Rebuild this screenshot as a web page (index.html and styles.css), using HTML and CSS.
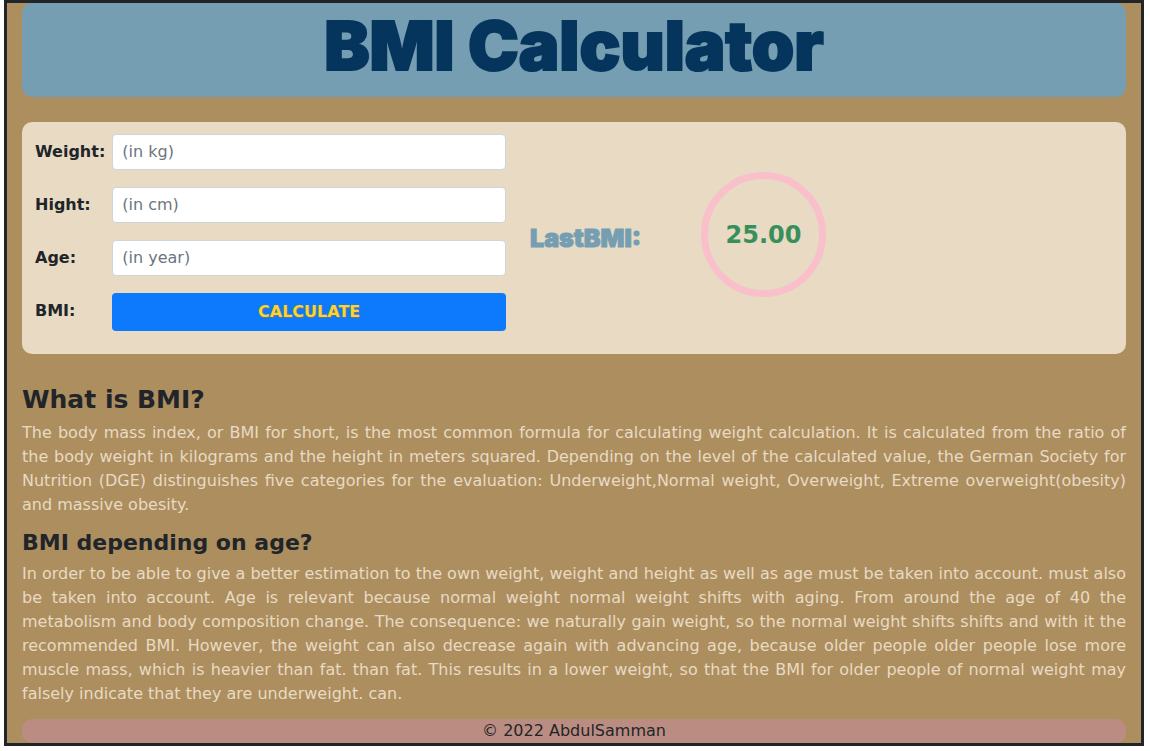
FILE: index.html
```html
<!DOCTYPE html>
<html lang="en">
<head>
<meta charset="utf-8">
<title>BMI Calculator</title>
<link rel="stylesheet" href="styles.css">
</head>
<body>
<div class="page">
  <header class="banner"><h1 class="title">BMI Calculator</h1></header>
  <main>
    <section class="card">
      <form class="form">
        <label class="label" for="weight">Weight:</label>
        <input class="field" id="weight" type="text" placeholder="(in kg)">
        <label class="label" for="height">Hight:</label>
        <input class="field" id="height" type="text" placeholder="(in cm)">
        <label class="label" for="age">Age:</label>
        <input class="field" id="age" type="text" placeholder="(in year)">
        <label class="label" for="calculate">BMI:</label>
        <button class="calculate" id="calculate" type="button">CALCULATE</button>
      </form>
      <h2 class="last">LastBMI:</h2>
      <output class="result">25.00</output>
    </section>
    <h2 class="heading">What is BMI?</h2>
    <p class="text">The body mass index, or BMI for short, is the most common formula for calculating weight calculation. It is calculated from the ratio of the body weight in kilograms and the height in meters squared. Depending on the level of the calculated value, the German Society for Nutrition (DGE) distinguishes five categories for the evaluation: Underweight,Normal weight, Overweight, Extreme overweight(obesity) and massive obesity.</p>
    <h3 class="subheading">BMI depending on age?</h3>
    <p class="text">In order to be able to give a better estimation to the own weight, weight and height as well as age must be taken into account. must also be taken into account. Age is relevant because normal weight normal weight shifts with aging. From around the age of 40 the metabolism and body composition change. The consequence: we naturally gain weight, so the normal weight shifts shifts and with it the recommended BMI. However, the weight can also decrease again with advancing age, because older people older people lose more muscle mass, which is heavier than fat. than fat. This results in a lower weight, so that the BMI for older people of normal weight may falsely indicate that they are underweight. can.</p>
  </main>
  <footer class="footer">© 2022 AbdulSamman</footer>
</div>
</body>
</html>
```
FILE: styles.css
```css
*, *::before, *::after { box-sizing: border-box; }

body {
  margin: 0;
  background: #fff;
  color: #212529;
  font: 16px/24px "DejaVu Sans", sans-serif;
}

.page {
  margin: 0 6px 0 4px;
  padding: 0 15px;
  border: 3px solid #212529;
  background: #ad8e5f;
}

.banner {
  margin-bottom: 25px;
  padding: 3px 0 13px;
  border-radius: 10px;
  background: #759eb2;
  text-align: center;
}

.title {
  margin: 0;
  color: #05355d;
  font: 900 68px/78px Inter, sans-serif;
  -webkit-text-stroke: 2px #05355d;
}

.card {
  display: grid;
  grid-template-columns: 471fr 147fr 412fr;
  align-items: center;
  gap: 24px;
  margin-bottom: 31px;
  padding: 12px 13px 23px;
  border-radius: 10px;
  background: #e8dac3;
}

.form {
  display: grid;
  grid-template-columns: auto 1fr;
  gap: 17px 7px;
}

.label {
  line-height: 36px;
  font-weight: bold;
}

.field {
  width: 100%;
  min-width: 0;
  height: 36px;
  padding: 0 9px 2px;
  border: 1px solid #ced4da;
  border-radius: 4px;
  background: #fff;
  color: #495057;
  font: inherit;
}

.field::placeholder { color: #6c757d; opacity: 1; }

.calculate {
  height: 38px;
  border: 0;
  border-radius: 4px;
  background: #0d7afd;
  color: #fbd334;
  font: bold 16px/24px "DejaVu Sans", sans-serif;
  text-shadow: 1px 1px 1px #6c757d;
}

.last {
  margin: 10px 0 0;
  color: #759eb2;
  font: 900 25px/30px Inter, sans-serif;
  -webkit-text-stroke: 1px #759eb2;
}

.result {
  display: grid;
  place-items: center;
  width: 125px;
  height: 125px;
  margin-top: 4px;
  border: 7px solid #f9c0cb;
  border-radius: 50%;
  color: #398f5c;
  font-size: 24px;
  font-weight: bold;
}

.heading, .subheading {
  margin: 0 0 6px;
  font-size: 25px;
  line-height: 30px;
}

.subheading {
  font-size: 22px;
  line-height: 26px;
}

.text {
  margin: 0 0 13px;
  color: #e8dac3;
  text-align: justify;
}

.footer {
  border-radius: 10px;
  background: #bb8d82;
  text-align: center;
}
```
